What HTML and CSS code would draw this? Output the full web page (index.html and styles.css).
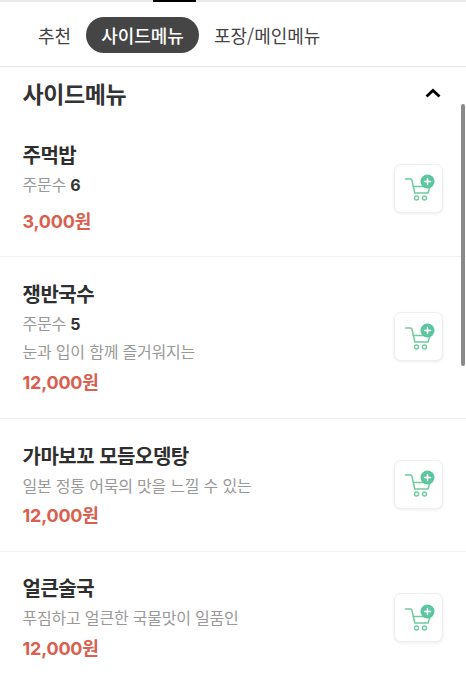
FILE: index.html
```html
<!DOCTYPE html>
<html lang="ko">
<head>
<meta charset="utf-8">
<title>사이드메뉴</title>
<link rel="stylesheet" href="styles.css">
</head>
<body>
<svg class="sprite" width="0" height="0">
  <symbol id="cart" viewBox="0 0 30 30" overflow="visible">
    <path d="M1.500 6H6.500C7.300 6 7.800 6.500 8 7.300L10.800 20H24L25.800 14.500" fill="none" stroke="#6fcb9f" stroke-width="1.500" stroke-linecap="round" stroke-linejoin="round"/>
    <path d="M9.300 13.500H25.800" fill="none" stroke="#6fcb9f" stroke-width="1.400" stroke-linecap="round"/>
    <circle cx="12.500" cy="25" r="2" fill="none" stroke="#6fcb9f" stroke-width="1.400"/>
    <circle cx="20.500" cy="25" r="2" fill="none" stroke="#6fcb9f" stroke-width="1.400"/>
    <circle cx="23.500" cy="8.500" r="7" fill="#5cc6a0"/>
    <path d="M23.500 5.500V11.500M20.500 8.500H26.500" stroke="#fff" stroke-width="1.500" stroke-linecap="round"/>
  </symbol>
</svg>
<div class="screen">
  <div class="topline"><span class="indicator"></span></div>
  <nav class="tabs">
    <span class="tab">추천</span>
    <span class="tab active">사이드메뉴</span>
    <span class="tab">포장/메인메뉴</span>
  </nav>
  <header class="section-head">
    <h1>사이드메뉴</h1>
    <svg class="chevron" width="18" height="12" viewBox="0 0 18 12"><path d="M2.500 9.500L9 3.500L15.500 9.500" fill="none" stroke="#000" stroke-width="2.800"/></svg>
  </header>
  <main class="list">
    <span class="scrollbar"></span>
    <article class="item item-1">
      <div class="info">
        <h2>주먹밥</h2>
        <p class="orders">주문수 <b>6</b></p>
        <p class="price">3,000원</p>
      </div>
      <button class="cart-btn" aria-label="담기"><svg class="cart-icon" width="30" height="30"><use href="#cart"/></svg></button>
    </article>
    <article class="item item-2">
      <div class="info">
        <h2>쟁반국수</h2>
        <p class="orders">주문수 <b>5</b></p>
        <p class="desc">눈과 입이 함께 즐거워지는</p>
        <p class="price">12,000원</p>
      </div>
      <button class="cart-btn" aria-label="담기"><svg class="cart-icon" width="30" height="30"><use href="#cart"/></svg></button>
    </article>
    <article class="item item-3">
      <div class="info">
        <h2>가마보꼬 모듬오뎅탕</h2>
        <p class="desc">일본 정통 어묵의 맛을 느낄 수 있는</p>
        <p class="price">12,000원</p>
      </div>
      <button class="cart-btn" aria-label="담기"><svg class="cart-icon" width="30" height="30"><use href="#cart"/></svg></button>
    </article>
    <article class="item item-4">
      <div class="info">
        <h2>얼큰술국</h2>
        <p class="desc">푸짐하고 얼큰한 국물맛이 일품인</p>
        <p class="price">12,000원</p>
      </div>
      <button class="cart-btn" aria-label="담기"><svg class="cart-icon" width="30" height="30"><use href="#cart"/></svg></button>
    </article>
  </main>
</div>
</body>
</html>
```
FILE: styles.css
```css
* { box-sizing: border-box; margin: 0; padding: 0; }
html, body { width: 466px; height: 692px; overflow: hidden; background: #fff; }
body { font-family: "Noto Sans CJK KR", "Noto Sans", sans-serif; color: #2e2e2e; }
.sprite { position: absolute; }
.screen { width: 466px; height: 692px; overflow: hidden; }
.topline { height: 2px; background: #e9e9e9; padding-left: 153px; }
.indicator { display: block; width: 43px; height: 2px; background: #000; }
.tabs { height: 65px; display: flex; align-items: center; gap: 15px; padding: 1px 0 0 38px; border-bottom: 1px solid #e3e3e3; }
.tab { font-size: 18px; color: #444; line-height: 36px; }
.tab.active { background: #454545; color: #fff; font-weight: 500; border-radius: 18px; padding: 0 15px; height: 36px; }
.section-head { height: 55px; display: flex; align-items: center; justify-content: space-between; padding: 0 24px 4px 22.500px; }
h1 { font-size: 23px; font-weight: 700; letter-spacing: -0.4px; color: #333; }
.list { position: relative; }
.scrollbar { position: absolute; right: 1px; top: -18px; width: 4px; height: 262px; border-radius: 2px; background: #8a8a8a; }
.item { display: flex; justify-content: space-between; align-items: center; padding: 0 23px 0 22.500px; border-bottom: 1px solid #f2f2f2; }
.item-1 { height: 135px; }
.item-2 { height: 162px; }
.item-3 { height: 133px; }
.item-4 { height: 133px; border-bottom: 0; }
.info { display: flex; flex-direction: column; align-self: flex-start; }
.item-1 .info { padding-top: 19px; }
.item-2 .info { padding-top: 23px; }
.item-3 .info { padding-top: 23px; }
.item-4 .info { padding-top: 22px; }
h2 { font-size: 20px; line-height: 28px; font-weight: 700; letter-spacing: -0.5px; color: #2e2e2e; }
.orders, .desc { font-size: 16px; line-height: 24px; letter-spacing: -0.2px; color: #999; }
.orders { margin-top: 3px; }
.orders b { color: #333; font-weight: 700; font-family: "Inter", sans-serif; }
.desc { margin-top: 3px; }
.price { font-size: 18px; line-height: 26px; font-weight: 700; color: #d9604f; letter-spacing: -0.2px; margin-top: 6px; font-family: "Inter", "Noto Sans CJK KR", sans-serif; }
.item-1 .price { margin-top: 12px; }
.item-2 .price { margin-top: 7px; }
.item-4 .price { margin-top: 7px; }
.cart-btn { width: 49px; height: 49px; background: #fff; border: 1px solid #efefef; border-radius: 7px; box-shadow: 0 1px 3px rgba(0,0,0,.08); display: flex; align-items: center; justify-content: center; flex: none; margin-bottom: 2px; }
.cart-icon { overflow: visible; }
```
